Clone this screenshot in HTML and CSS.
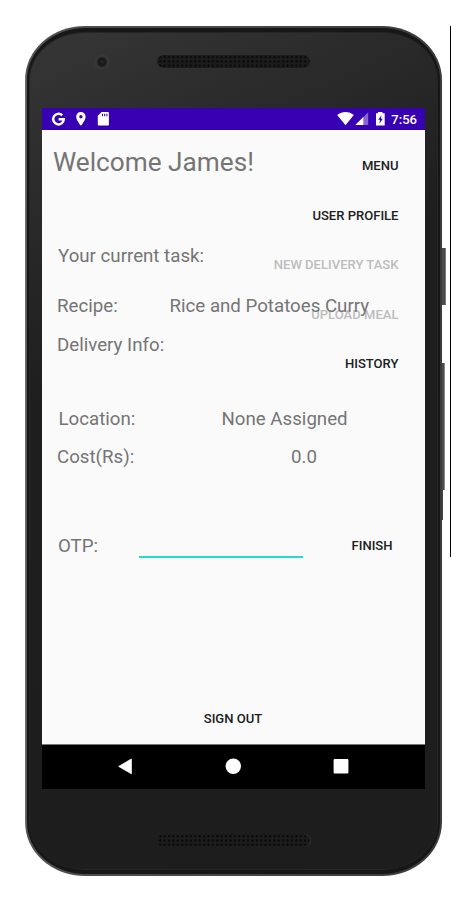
FILE: index.html
```html
<!DOCTYPE html>
<html lang="en">
<head>
<meta charset="utf-8">
<title>Delivery task</title>
<link rel="stylesheet" href="styles.css">
</head>
<body>
<div class="stage">
  <div class="phone">
    <div class="bezel">
      <div class="forehead"><i class="camera"></i><i class="speaker"></i></div>
      <div class="screen">
        <header class="status">
          <svg class="status-left" width="62" height="22" viewBox="0 0 62 22" fill="#fff">
            <path d="M13.200 7.300A5.300 5.300 0 1 0 14.800 11.300H9.600" fill="none" stroke="#fff" stroke-width="2.400"/>
            <path d="M31.900 4C29.200 4 27.200 6 27.200 8.700C27.200 12.200 31.900 17.800 31.900 17.800S36.600 12.200 36.600 8.700C36.600 6 34.600 4 31.900 4ZM31.900 10.500A1.700 1.700 0 1 1 31.900 7.100A1.700 1.700 0 0 1 31.900 10.500Z" fill-rule="evenodd"/>
            <path d="M48.800 7.800L52.600 4H58.700Q59.900 4 59.900 5.200V16.400Q59.900 17.600 58.700 17.600H50Q48.800 17.600 48.800 16.400Z"/>
            <path d="M53.500 5.700V8.200M55.700 5.700V8.200M57.900 5.700V8.200" stroke="#3700b3" stroke-width="1.100"/>
          </svg>
          <div class="status-right">
            <svg width="50" height="22" viewBox="0 0 50 22" fill="#fff">
              <path d="M0.200 7C4.800 3 12.300 3 16.800 7L8.500 17.200Z"/>
              <path d="M31.200 4.200V17H18.300Z" opacity=".4"/>
              <path d="M26.300 9.100V17H18.300Z"/>
              <path d="M39 5.300H41V4H45.500V5.300H47.700V17.600H39Z"/>
              <path d="M44.400 7.300L41.200 11.700H43L42.500 15.400L45.800 10.800H44Z" fill="#3700b3"/>
            </svg>
            <span class="clock">7:56</span>
          </div>
        </header>
        <main class="app">
          <nav class="menu">
            <button>MENU</button>
            <button>USER PROFILE</button>
            <button disabled>NEW DELIVERY TASK</button>
            <button disabled>UPLOAD MEAL</button>
            <button>HISTORY</button>
          </nav>
          <section class="content">
            <h1>Welcome James!</h1>
            <div class="row task">Your current task:</div>
            <div class="row recipe"><span>Recipe:</span><span>Rice and Potatoes Curry</span></div>
            <div class="row delivery">Delivery Info:</div>
            <div class="row location"><span>Location:</span><span>None Assigned</span></div>
            <div class="row cost"><span>Cost(Rs):</span><span>0.0</span></div>
            <div class="row otp"><span>OTP:</span><i class="field"></i><button>FINISH</button></div>
            <button class="signout">SIGN OUT</button>
          </section>
        </main>
        <footer class="navbar">
          <svg width="383" height="45" viewBox="0 0 383 45" fill="#fff">
            <path d="M76.700 22.400L89.400 15V29.800Z" stroke="#fff" stroke-width=".8" stroke-linejoin="round"/>
            <circle cx="191.300" cy="22.200" r="7.700"/>
            <rect x="291.600" y="15" width="14.800" height="14.500" rx="1"/>
          </svg>
        </footer>
      </div>
      <div class="chin"><i class="speaker"></i></div>
    </div>
  </div>
  <div class="side-buttons"><i class="power"></i><i class="volume"></i><i class="volume-base"></i></div>
  <div class="edge"></div>
</div>
</body>
</html>
```
FILE: styles.css
```css
* { box-sizing: border-box; }
body { margin: 0; background: #fff; font-family: Roboto, "Liberation Sans", sans-serif; }
i { display: block; }
.stage { display: flex; width: 451px; height: 897px; padding: 26px 0 0 25px; overflow: hidden; }
.phone {
  flex: none;
  width: 417px;
  height: 850px;
  padding: 2px;
  border-radius: 60px / 54px;
  background: linear-gradient(90deg, #777 0, #505050 2px, #484848 50%, #3c3a3b 100%);
}
.bezel {
  height: 846px;
  padding: 0 12px 0 13px;
  border: 2px solid #171717;
  border-top-width: 4px;
  border-bottom-width: 4px;
  border-radius: 58px / 52px;
  background: linear-gradient(155deg, #363636 0, #2b2b2b 16%, #1e1e1e 36%, #1d1d1d 100%);
  box-shadow: inset 0 0 0 1px #252525;
}
.forehead { display: flex; height: 76px; padding: 23px 0 0 52px; }
.camera {
  width: 16px;
  height: 16px;
  margin-top: -1px;
  border-radius: 50%;
  background: radial-gradient(circle, #33242e 0, #17171b 3px, #222 4.500px, #363636 5.500px, #363636 8px);
}
.speaker {
  width: 153px;
  height: 13px;
  border-radius: 7px;
  background: radial-gradient(circle, #0a0a0a 1px, transparent 1.300px) 1px 0 / 4.400px 4.300px, #1c1c1c;
  box-shadow: 1px 0 0 #303030;
}
.forehead .speaker { margin-left: 47px; }
.screen { width: 383px; height: 681px; display: flex; flex-direction: column; }
.status { height: 22px; background: #3700b3; display: flex; justify-content: space-between; padding: 0 8px 0 7px; color: #fff; }
.status-right { display: flex; gap: 4px; }
.clock { font-size: 13.050px; line-height: 23px; font-weight: 500; }
.app { height: 614px; background: #fafafa; display: grid; }
.menu, .content { grid-area: 1 / 1; display: flex; flex-direction: column; }
.menu { align-items: flex-end; padding: 11px 26.500px 0 0; }
button {
  border: 0;
  padding: 0;
  background: none;
  color: #202020;
  font: 500 13.050px/1 Roboto, "Liberation Sans", sans-serif;
}
.menu button { height: 49.500px; }
.menu button:disabled { color: #bdbdbd; }
.content { color: #757575; font-size: 18.700px; line-height: 24px; padding-left: 15px; }
h1 { margin: 16px 0 0 -4px; font-size: 26.200px; line-height: 32px; font-weight: 400; }
.row { display: flex; height: 24px; }
.task { margin: 66px 0 0 1px; }
.recipe { margin-top: 26px; }
.recipe span:first-child { width: 112.500px; }
.delivery { margin-top: 15px; }
.location { margin: 50px 0 0 1.500px; }
.location span:first-child { width: 163px; }
.cost { margin-top: 14px; }
.cost span:first-child { width: 234px; }
.otp { margin: 65px 0 0 1px; }
.otp span { width: 81px; }
.field { flex: none; width: 164px; height: 24px; border-bottom: 2px solid #25dbcd; }
.otp button { margin-left: 48.500px; }
.signout { margin: 149px 0 0 -16px; height: 24px; }
.navbar { height: 45px; background: #000; border-top: 1px solid #777; }
.navbar svg { display: block; margin-top: -1px; }
.chin { height: 82px; padding: 45px 0 0 115px; }
.side-buttons { width: 4px; flex: none; padding-top: 222px; }
.power { width: 4px; height: 57px; background: #4b4b4b; border-right: 1px solid #777; }
.volume { width: 3px; height: 127px; margin-top: 58px; background: #4b4b4b; border-right: 1px solid #888; }
.volume-base { width: 1px; height: 30px; background: #444; }
.edge { width: 1px; height: 531px; margin-left: 4px; background: #000; flex: none; }
```
